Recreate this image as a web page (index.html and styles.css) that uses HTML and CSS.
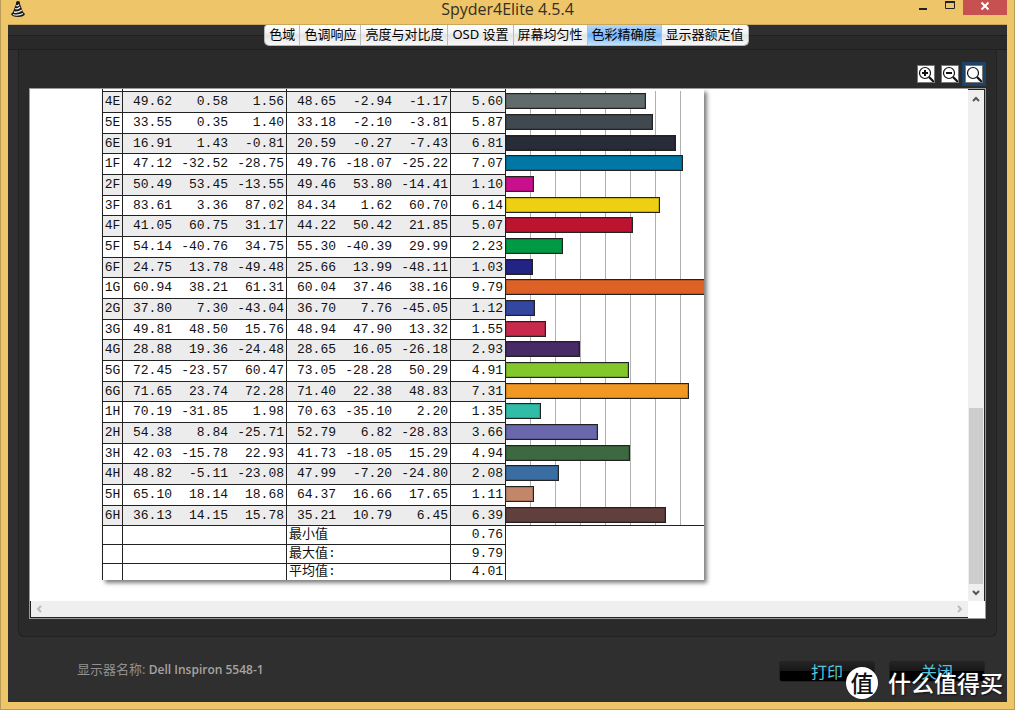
FILE: index.html
```html
<!DOCTYPE html>
<html lang="zh-CN">
<head>
<meta charset="utf-8">
<title>Spyder4Elite 4.5.4</title>
<link rel="stylesheet" href="styles.css">
</head>
<body>
<div class="window">
  <header class="titlebar">
    <svg class="app-icon" viewBox="0 0 16 18" width="16" height="18" aria-hidden="true">
      <path d="M6 2.500Q6 1 8 1Q10 1 10 2.500L10 4L13 12L15 14Q14 17 8 17Q2 17 1 14L3 12L6 4Z" fill="#1b1a18"/>
      <path d="M6 5.500Q8 6.500 9 4.500M5 8.500Q8 9.500 10 7M4 12Q8 13 12 10M3 14.500Q8 16 13 13.500" fill="none" stroke="#eee" stroke-width="1.300"/>
    </svg>
    <h1 class="title">Spyder4Elite 4.5.4</h1>
    <div class="controls">
      <button class="ctl" aria-label="最小化"><svg width="10" height="12" viewBox="0 0 10 12"><path d="M1 9h8" stroke="#222" stroke-width="2"/></svg></button>
      <button class="ctl" aria-label="最大化"><svg width="10" height="12" viewBox="0 0 10 12"><path d="M.5 2v6.500h9V2" fill="none" stroke="#222"/><path d="M0 2h10" stroke="#222" stroke-width="2"/></svg></button>
      <button class="ctl ctl-close" aria-label="关闭窗口"><svg width="10" height="10" viewBox="0 0 10 10"><path d="M1.500 1.500l7 7M8.500 1.500l-7 7" stroke="#fff" stroke-width="2"/></svg></button>
    </div>
  </header>
  <main class="client">
    <nav class="tabs-bar">
      <div class="tabs">
        <button class="tab">色域</button><button class="tab">色调响应</button><button class="tab">亮度与对比度</button><button class="tab">OSD 设置</button><button class="tab">屏幕均匀性</button><button class="tab tab-active">色彩精确度</button><button class="tab">显示器额定值</button>
      </div>
    </nav>
    <section class="panel">
      <div class="tools">
        <button class="tool" aria-label="放大"><svg viewBox="1 1 16 16"><circle cx="8" cy="8" r="5.500" fill="#fff" stroke="#111" stroke-width="1.200"/><path d="M12 12l5 5" stroke="#111" stroke-width="2.200"/><path d="M5 8h6M8 5v6" stroke="#111" stroke-width="2"/></svg></button>
        <button class="tool" aria-label="缩小"><svg viewBox="1 1 16 16"><circle cx="8" cy="8" r="5.500" fill="#fff" stroke="#111" stroke-width="1.200"/><path d="M12 12l5 5" stroke="#111" stroke-width="2.200"/><path d="M5 8h6" stroke="#111" stroke-width="2"/></svg></button>
        <button class="tool tool-active" aria-label="适合窗口"><svg viewBox="1 1 16 16"><circle cx="8" cy="8" r="5.500" fill="#fff" stroke="#111" stroke-width="1.200"/><path d="M12 12l5 5" stroke="#111" stroke-width="2.200"/></svg></button>
      </div>
      <div class="viewer">
        <div class="page-area">
          <table class="report">
            <colgroup><col class="c-id"><col class="c-l"><col class="c-ab"><col class="c-b"><col class="c-l"><col class="c-ab"><col class="c-b"><col class="c-de"><col class="c-chart"></colgroup>
            <tbody class="cut"><tr><td></td><td></td><td></td><td></td><td></td><td></td><td></td><td></td><td></td></tr></tbody>
            <tbody class="data">
              <tr><td>4E</td><td>49.62</td><td>0.58</td><td>1.56</td><td>48.65</td><td>-2.94</td><td>-1.17</td><td>5.60</td><td><div class="bar" style="width:140px;background:#616b6b"></div></td></tr>
              <tr><td>5E</td><td>33.55</td><td>0.35</td><td>1.40</td><td>33.18</td><td>-2.10</td><td>-3.81</td><td>5.87</td><td><div class="bar" style="width:147px;background:#414950"></div></td></tr>
              <tr><td>6E</td><td>16.91</td><td>1.43</td><td>-0.81</td><td>20.59</td><td>-0.27</td><td>-7.43</td><td>6.81</td><td><div class="bar" style="width:170px;background:#282c38"></div></td></tr>
              <tr><td>1F</td><td>47.12</td><td>-32.52</td><td>-28.75</td><td>49.76</td><td>-18.07</td><td>-25.22</td><td>7.07</td><td><div class="bar" style="width:177px;background:#0077a5"></div></td></tr>
              <tr><td>2F</td><td>50.49</td><td>53.45</td><td>-13.55</td><td>49.46</td><td>53.80</td><td>-14.41</td><td>1.10</td><td><div class="bar" style="width:28px;background:#c90f8b"></div></td></tr>
              <tr><td>3F</td><td>83.61</td><td>3.36</td><td>87.02</td><td>84.34</td><td>1.62</td><td>60.70</td><td>6.14</td><td><div class="bar" style="width:154px;background:#edcf14"></div></td></tr>
              <tr><td>4F</td><td>41.05</td><td>60.75</td><td>31.17</td><td>44.22</td><td>50.42</td><td>21.85</td><td>5.07</td><td><div class="bar" style="width:127px;background:#bc142f"></div></td></tr>
              <tr><td>5F</td><td>54.14</td><td>-40.76</td><td>34.75</td><td>55.30</td><td>-40.39</td><td>29.99</td><td>2.23</td><td><div class="bar" style="width:57px;background:#009a44"></div></td></tr>
              <tr><td>6F</td><td>24.75</td><td>13.78</td><td>-49.48</td><td>25.66</td><td>13.99</td><td>-48.11</td><td>1.03</td><td><div class="bar" style="width:27px;background:#232386"></div></td></tr>
              <tr><td>1G</td><td>60.94</td><td>38.21</td><td>61.31</td><td>60.04</td><td>37.46</td><td>38.16</td><td>9.79</td><td><div class="bar" style="width:244px;background:#de6126"></div></td></tr>
              <tr><td>2G</td><td>37.80</td><td>7.30</td><td>-43.04</td><td>36.70</td><td>7.76</td><td>-45.05</td><td>1.12</td><td><div class="bar" style="width:29px;background:#3346a0"></div></td></tr>
              <tr><td>3G</td><td>49.81</td><td>48.50</td><td>15.76</td><td>48.94</td><td>47.90</td><td>13.32</td><td>1.55</td><td><div class="bar" style="width:40px;background:#c72a4a"></div></td></tr>
              <tr><td>4G</td><td>28.88</td><td>19.36</td><td>-24.48</td><td>28.65</td><td>16.05</td><td>-26.18</td><td>2.93</td><td><div class="bar" style="width:74px;background:#472a66"></div></td></tr>
              <tr><td>5G</td><td>72.45</td><td>-23.57</td><td>60.47</td><td>73.05</td><td>-28.28</td><td>50.29</td><td>4.91</td><td><div class="bar" style="width:123px;background:#83c72c"></div></td></tr>
              <tr><td>6G</td><td>71.65</td><td>23.74</td><td>72.28</td><td>71.40</td><td>22.38</td><td>48.83</td><td>7.31</td><td><div class="bar" style="width:183px;background:#f09822"></div></td></tr>
              <tr><td>1H</td><td>70.19</td><td>-31.85</td><td>1.98</td><td>70.63</td><td>-35.10</td><td>2.20</td><td>1.35</td><td><div class="bar" style="width:35px;background:#30bca6"></div></td></tr>
              <tr><td>2H</td><td>54.38</td><td>8.84</td><td>-25.71</td><td>52.79</td><td>6.82</td><td>-28.83</td><td>3.66</td><td><div class="bar" style="width:92px;background:#6a68ad"></div></td></tr>
              <tr><td>3H</td><td>42.03</td><td>-15.78</td><td>22.93</td><td>41.73</td><td>-18.05</td><td>15.29</td><td>4.94</td><td><div class="bar" style="width:124px;background:#3c6940"></div></td></tr>
              <tr><td>4H</td><td>48.82</td><td>-5.11</td><td>-23.08</td><td>47.99</td><td>-7.20</td><td>-24.80</td><td>2.08</td><td><div class="bar" style="width:53px;background:#3a6da2"></div></td></tr>
              <tr><td>5H</td><td>65.10</td><td>18.14</td><td>18.68</td><td>64.37</td><td>16.66</td><td>17.65</td><td>1.11</td><td><div class="bar" style="width:28px;background:#c2866b"></div></td></tr>
              <tr><td>6H</td><td>36.13</td><td>14.15</td><td>15.78</td><td>35.21</td><td>10.79</td><td>6.45</td><td>6.39</td><td><div class="bar" style="width:160px;background:#613f3c"></div></td></tr>
            </tbody>
            <tbody class="summary">
              <tr><td></td><td colspan="3"></td><th colspan="3" scope="row">最小值</th><td>0.76</td><td rowspan="3" class="blank"></td></tr>
              <tr><td></td><td colspan="3"></td><th colspan="3" scope="row">最大值:</th><td>9.79</td></tr>
              <tr><td></td><td colspan="3"></td><th colspan="3" scope="row">平均值:</th><td>4.01</td></tr>
            </tbody>
          </table>
        </div>
        <div class="vscroll">
          <svg width="8" height="6" viewBox="0 0 8 6"><path d="M1 5l3-3 3 3" fill="none" stroke="#555" stroke-width="2"/></svg>
          <div class="thumb"></div>
          <svg width="8" height="6" viewBox="0 0 8 6"><path d="M1 1l3 3 3-3" fill="none" stroke="#555" stroke-width="2"/></svg>
        </div>
        <div class="hscroll">
          <svg width="6" height="8" viewBox="0 0 6 8"><path d="M5 1L2 4l3 3" fill="none" stroke="#bbb" stroke-width="2"/></svg>
          <svg width="6" height="8" viewBox="0 0 6 8"><path d="M1 1l3 3-3 3" fill="none" stroke="#bbb" stroke-width="2"/></svg>
        </div>
        <div class="corner"></div>
      </div>
    </section>
    <footer class="footer">
      <p class="monitor">显示器名称: <b>Dell Inspiron 5548-1</b></p>
      <div class="actions">
        <button class="action">打印</button>
        <button class="action">关闭</button>
      </div>
    </footer>
  </main>
  <div class="watermark"><span class="seal">值</span><span>什么值得买</span></div>
</div>
</body>
</html>
```
FILE: styles.css
```css
* { box-sizing: border-box; }
body {
  margin: 0;
  font-family: "Open Sans", "Noto Sans CJK SC", sans-serif;
}
button { font: inherit; margin: 0; padding: 0; border: 0; cursor: pointer; }
svg { display: block; }

.window {
  position: relative;
  display: flex;
  flex-direction: column;
  height: 100vh;
  padding: 0 8px 8px;
  background: #efc569;
  box-shadow: inset 1px 0 #b99b58, inset -1px -1px #b99b58;
}
.titlebar {
  display: grid;
  grid-template-columns: 1fr auto 1fr;
  align-items: start;
  height: 25px;
  border-bottom: 1px solid #c9a65b;
}
.app-icon { margin-left: 2px; }
.title {
  margin: 0;
  font-size: 16px;
  line-height: 19px;
  font-weight: 400;
  color: #352e22;
}
.controls { display: flex; justify-content: flex-end; }
.ctl {
  display: grid;
  place-items: center;
  width: 27px;
  height: 12px;
  background: none;
}
.ctl-close { width: 44px; height: 15px; background: #c75050; padding-bottom: 4px; }

.client {
  flex: 1;
  min-height: 0;
  display: flex;
  flex-direction: column;
  background: #2f2f2f;
}
.tabs-bar {
  display: flex;
  justify-content: center;
  align-items: flex-start;
  height: 25px;
  background: linear-gradient(#2f2f2f 10px, #1f1f1f 10px, #1f1f1f 11px, #292929 11px, #292929 24px, #1f1f1f 24px);
}
.tabs {
  display: flex;
  height: 21px;
  margin-right: 2px;
  border: 1px solid #b4b4b4;
  border-top: 0;
  border-radius: 3px 3px 5px 5px;
  overflow: hidden;
}
.tab {
  padding: 0 4px;
  font-family: "Noto Sans", "Noto Sans CJK SC", sans-serif;
  font-size: 13px;
  line-height: 18px;
  padding-bottom: 2px;
  color: #000;
  background: linear-gradient(#fff, #f3f3f3 40%, #e4e4e4 50%, #f8f8f8);
}
.tab + .tab { border-left: 1px solid #bdbdbd; }
.tab-active { background: linear-gradient(#b5d8f8, #8cc1f5 40%, #70b2f3 50%, #c3e5ff); }

.panel {
  flex: 1;
  min-height: 0;
  display: flex;
  flex-direction: column;
  margin: 0 10px;
  padding: 12px 10px 17px;
  border: 1px solid #222;
  border-top: 0;
  border-radius: 0 0 6px 6px;
  background: #2a2a2a;
}
.tools {
  display: flex;
  justify-content: flex-end;
  align-items: center;
  gap: 6px;
  height: 24px;
  margin-bottom: 2px;
}
.tool { border: 1px solid #777; background: #fff; width: 18px; height: 18px; }
.tool svg { width: 16px; height: 16px; }
.tool-active { outline: 3px solid #1c4267; margin-right: 3px; }

.viewer {
  flex: 1;
  min-height: 0;
  display: grid;
  grid-template: minmax(0, 1fr) 17px / minmax(0, 1fr) 17px;
  border: 1px solid #999;
  background: #fff;
}
.page-area { overflow: hidden; padding-left: 72px; }
.vscroll {
  display: flex;
  flex-direction: column;
  align-items: center;
  padding: 6px 0 5px;
  border-right: 1px solid #222;
  border-top: 1px solid #222;
  background: #efefef;
}
.thumb { width: 14px; height: 176px; margin: auto 0 6px; background: #cdcdcd; }
.hscroll {
  display: flex;
  justify-content: space-between;
  align-items: center;
  padding: 0 5px;
  border-left: 1px solid #222;
  border-bottom: 1px solid #222;
  background: #efefef;
}
.corner { background: #fff; }

.report {
  table-layout: fixed;
  width: 602px;
  border-collapse: separate;
  border-spacing: 0;
  background: #fff;
  box-shadow: 3px 3px 4px rgba(0, 0, 0, .5);
  font-family: "Liberation Mono", "Noto Sans CJK SC", monospace;
  font-size: 13px;
  line-height: 18px;
  color: #111;
}
.c-id { width: 21px; }
.c-l { width: 50px; }
.c-ab { width: 56px; }
.c-b { width: 58px; }
.c-de { width: 55px; }
.report td, .report th {
  padding: 0;
  text-align: right;
  font-weight: 400;
  border-top: 1px solid #222;
  white-space: nowrap;
}
.report td:first-child { border-left: 1px solid #222; border-right: 1px solid #222; text-align: center; }
.cut tr { height: 2px; }
.report .cut td { border-top: 0; }
.cut td:nth-child(4), .cut td:nth-child(7), .cut td:nth-child(8),
.data td:nth-child(4), .data td:nth-child(7), .data td:nth-child(8) {
  border-right: 1px solid #222;
  padding-right: 2px;
}
.data td:nth-child(2), .data td:nth-child(3), .data td:nth-child(5), .data td:nth-child(6) { padding-right: 1px; }
.data tr { height: 21px; }
.data tr:nth-child(3n) { height: 20px; }
.data tr:nth-child(odd) td { background-color: #ececec; }
.data tr td:last-child {
  overflow: hidden;
  border-top: 0;
  vertical-align: top;
  padding-top: 2px;
  background: repeating-linear-gradient(90deg, #fff 0, #fff 24px, #b0b0b0 24px, #b0b0b0 25px);
}
.bar { height: 16px; border: 1px solid #222; border-left: 0; box-shadow: inset 0 0 0 1px rgba(0, 0, 0, .15); }
.summary tr { height: 19px; }
.summary tr:last-child { height: 17px; }
.summary td, .summary th { line-height: 16px; }
.report .summary td { border-right: 1px solid #222; padding-right: 2px; }
.report .summary th { text-align: left; padding-left: 2px; border-right: 1px solid #222; }
.report .summary .blank { border-right: 0; }

.footer {
  display: flex;
  justify-content: space-between;
  align-items: flex-start;
  height: 65px;
  padding: 24px 22px 0 69px;
}
.monitor { margin: 0; font-size: 13px; line-height: 16px; color: #909090; }
.monitor b { font-size: 12px; font-weight: 600; color: #a4a4a4; }
.actions { display: flex; gap: 14px; }
.action {
  width: 96px;
  height: 21px;
  border: 1px solid #222;
  border-radius: 3px;
  background: linear-gradient(#252525, #171717 45%, #000 50%);
  color: #55c5df;
  font-size: 16px;
  line-height: 16px;
}
.watermark {
  position: absolute;
  right: 12px;
  bottom: 11px;
  display: flex;
  align-items: center;
  gap: 10px;
  color: #fff;
  font-size: 23px;
  font-weight: 500;
  line-height: 32px;
  text-shadow: 1px 1px 2px #111;
}
.seal {
  width: 32px;
  height: 32px;
  border-radius: 50%;
  background: #fff;
  color: #111;
  text-align: center;
  text-shadow: none;
}
```
